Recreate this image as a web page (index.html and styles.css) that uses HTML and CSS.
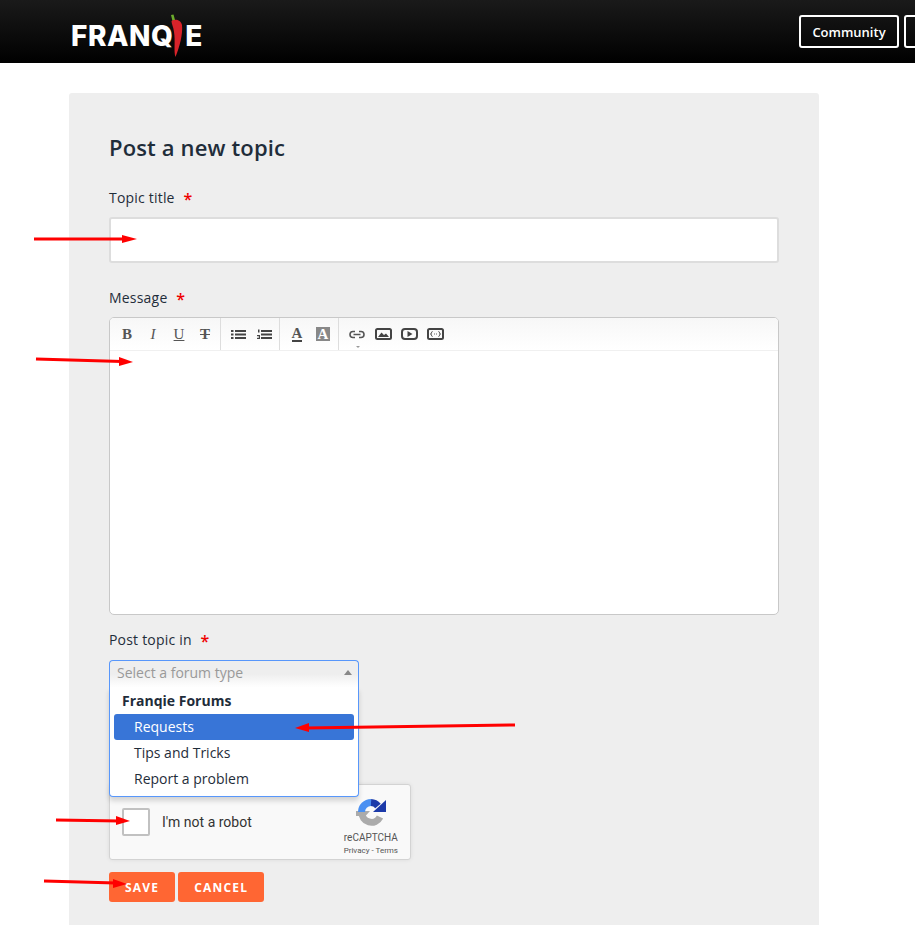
FILE: index.html
```html
<!DOCTYPE html>
<html lang="en">
<head>
    <meta charset="UTF-8">
    <meta name="viewport" content="width=device-width, initial-scale=1.0">
    <title>Post a new topic - Franqie</title>
    <link rel="stylesheet" href="styles.css">
</head>
<body>

<header class="site-header">
    <a class="logo" href="#">
        <span>FRANQ</span>
        <svg class="logo-pepper" width="14" height="44" viewBox="0 0 14 44">
            <path d="M1 1 L3.500 0.500 L5 6 L2.500 7 Z" fill="#6cab2c"/>
            <path d="M1.500 7 C5 4.500 11 6 12 11 C13 20 9.500 33 5.500 43 C3.500 38 5.500 26 4 18 C3.500 13 1.500 10 1.500 7 Z" fill="#d8232a"/>
        </svg>
        <span>E</span>
    </a>
    <nav class="site-nav">
        <a class="nav-btn" href="#">Community</a>
        <a class="nav-btn nav-btn-cut" href="#"></a>
    </nav>
</header>

<main class="panel">
    <h1>Post a new topic</h1>

    <form>
        <div class="form-group">
            <label for="topicTitle">Topic title <span class="req">*</span></label>
            <input type="text" id="topicTitle" class="text-input">
        </div>

        <div class="form-group editor-group">
            <label>Message <span class="req">*</span></label>
            <div class="editor">
                <div class="toolbar">
                    <div class="tb-group">
                        <span class="tb-btn tb-serif"><b>B</b></span>
                        <span class="tb-btn tb-serif"><i>I</i></span>
                        <span class="tb-btn tb-serif tb-under">U</span>
                        <span class="tb-btn tb-serif tb-strike"><b>T</b></span>
                    </div>
                    <div class="tb-group">
                        <span class="tb-btn">
                            <svg width="15" height="11" viewBox="0 0 15 11" fill="#444"><rect y="1" width="2.500" height="2"/><rect y="4.500" width="2.500" height="2"/><rect y="8" width="2.500" height="2"/><rect x="4" y="1" width="11" height="2"/><rect x="4" y="4.500" width="11" height="2"/><rect x="4" y="8" width="11" height="2"/></svg>
                        </span>
                        <span class="tb-btn">
                            <svg width="15" height="11" viewBox="0 0 15 11" fill="#444"><rect x="1" y="0.500" width="1.500" height="3"/><rect y="6" width="3" height="1.200"/><rect y="8.800" width="3" height="1.200"/><rect x="1.800" y="7" width="1.200" height="2"/><rect x="4" y="1" width="11" height="2"/><rect x="4" y="4.500" width="11" height="2"/><rect x="4" y="8" width="11" height="2"/></svg>
                        </span>
                    </div>
                    <div class="tb-group">
                        <span class="tb-btn tb-serif tb-color"><b>A</b></span>
                        <span class="tb-btn tb-serif"><b class="tb-bg">A</b></span>
                    </div>
                    <div class="tb-group tb-last">
                        <span class="tb-btn tb-caret">
                            <svg width="16" height="9" viewBox="0 0 16 9" fill="none" stroke="#555" stroke-width="1.600"><path d="M6 1.500 H4 A3 3 0 0 0 4 7.500 H6 M10 1.500 H12 A3 3 0 0 1 12 7.500 H10 M4.500 4.500 H11.500"/></svg>
                        </span>
                        <span class="tb-btn">
                            <svg width="17" height="12" viewBox="0 0 17 12"><rect x="1" y="1" width="15" height="10" rx="1.500" fill="none" stroke="#444" stroke-width="2"/><path d="M3 9 L6.500 4.500 L9 7 L11 5.500 L14 9 Z" fill="#444"/></svg>
                        </span>
                        <span class="tb-btn">
                            <svg width="17" height="12" viewBox="0 0 17 12"><rect x="1" y="1" width="15" height="10" rx="3" fill="none" stroke="#444" stroke-width="2"/><path d="M6.500 3 L11.500 6 L6.500 9 Z" fill="#444"/></svg>
                        </span>
                        <span class="tb-btn">
                            <svg width="17" height="12" viewBox="0 0 17 12"><rect x="1" y="1" width="15" height="10" rx="1.500" fill="none" stroke="#444" stroke-width="2"/><path d="M5.500 3.500 C4 3.500 5 6 3.500 6 C5 6 4 8.500 5.500 8.500 M11.500 3.500 C13 3.500 12 6 13.500 6 C12 6 13 8.500 11.500 8.500 M7 6 H7.800 M9.200 6 H10" fill="none" stroke="#444" stroke-width="1"/></svg>
                        </span>
                    </div>
                </div>
                <div class="editor-body"></div>
            </div>
        </div>

        <div class="form-group select-group">
            <label>Post topic in <span class="req">*</span></label>
            <div class="select-wrap">
                <div class="select-box">
                    <span>Select a forum type</span>
                    <span class="select-arrow"></span>
                </div>
                <ul class="select-menu">
                    <li class="menu-head">Franqie Forums</li>
                    <li class="menu-item active">Requests</li>
                    <li class="menu-item">Tips and Tricks</li>
                    <li class="menu-item">Report a problem</li>
                </ul>
            </div>
        </div>

        <div class="recaptcha">
            <span class="rc-check"></span>
            <span class="rc-label">I'm not a robot</span>
            <div class="rc-brand">
                <svg width="32" height="32" viewBox="0 0 32 32" fill="none" stroke-width="7">
                    <path d="M7 15 A9.500 9.500 0 0 0 25 20" stroke="#ababab"/>
                    <path d="M1 14 H15 L10.500 19 H1 Z" fill="#ababab"/>
                    <path d="M6.500 15 A9.500 9.500 0 0 1 16 5.500" stroke="#4a90f2"/>
                    <path d="M16 5.500 A9.500 9.500 0 0 1 23 9" stroke="#1c3aa9"/>
                    <path d="M31 3 V15 H18 Z" fill="#1c3aa9"/>
                </svg>
                <span class="rc-name">reCAPTCHA</span>
                <span class="rc-links">Privacy - Terms</span>
            </div>
        </div>

        <div class="actions">
            <button type="button" class="btn">Save</button>
            <button type="button" class="btn">Cancel</button>
        </div>
    </form>
</main>

<svg class="arrows" width="915" height="925" viewBox="0 0 915 925">
    <g fill="#f00" stroke="#f00">
        <path d="M34 239 L125 239" stroke-width="3" fill="none"/>
        <path d="M122 235 L137 239 L122 243 Z" stroke="none"/>
        <path d="M36 359 L122 361.500" stroke-width="3" fill="none"/>
        <path d="M119 357 L133 362 L119 366 Z" stroke="none"/>
        <path d="M515 725 L305 728" stroke-width="3" fill="none"/>
        <path d="M309 723 L295 728 L309 732 Z" stroke="none"/>
        <path d="M56 820 L120 821" stroke-width="3" fill="none"/>
        <path d="M116 816 L130 821 L116 825 Z" stroke="none"/>
        <path d="M44 881 L116 883" stroke-width="3" fill="none"/>
        <path d="M113 879 L127 884 L113 888 Z" stroke="none"/>
    </g>
</svg>

</body>
</html>
```

FILE: styles.css
```css
* {
    box-sizing: border-box;
}
html, body {
    height: 925px;
    overflow: hidden;
}
body {
    position: relative;
    margin: 0;
    padding: 0;
    font-family: "Open Sans", Arial, sans-serif;
    font-size: 14px;
    color: #1f2d3a;
    background-color: #fff;
}

/* header */
.site-header {
    display: flex;
    align-items: center;
    justify-content: space-between;
    height: 63px;
    padding-left: 71px;
    background: linear-gradient(#1a1a1a, #000);
    overflow: hidden;
}
.logo {
    display: flex;
    align-items: center;
    margin-top: 8px;
    font-family: Inter, Arial, sans-serif;
    font-size: 28px;
    font-weight: 800;
    letter-spacing: 0.5px;
    color: #fff;
    text-decoration: none;
}
.logo-pepper {
    margin: 0 1px 0 -3px;
}
.site-nav {
    display: flex;
    gap: 5px;
    margin-right: -60px;
}
.nav-btn {
    display: block;
    width: 100px;
    height: 33px;
    line-height: 30px;
    text-align: center;
    border: 2px solid #fff;
    border-radius: 3px;
    font-size: 13px;
    font-weight: 600;
    color: #fff;
    text-decoration: none;
}
.nav-btn-cut {
    width: 71px;
}

/* panel */
.panel {
    width: 750px;
    height: 832px;
    margin: 30px 0 0 69px;
    padding: 39px 40px 0;
    background-color: #eee;
    border-radius: 3px 3px 0 0;
}
h1 {
    margin: 0 0 25px;
    font-size: 22px;
    line-height: 30px;
    font-weight: 600;
    letter-spacing: 0.15px;
    color: #1f2d3a;
}
.form-group {
    margin-bottom: 24px;
}
.editor-group {
    margin-bottom: 14px;
}
.form-group label {
    display: block;
    height: 20px;
    margin-bottom: 10px;
    line-height: 22px;
    letter-spacing: 0.2px;
}
.req {
    margin-left: 5px;
    color: #e00;
    font-size: 16px;
    font-weight: 600;
    vertical-align: -2px;
}
.text-input {
    display: block;
    width: 670px;
    height: 46px;
    background: #fff;
    border: 2px solid #ddd;
    border-radius: 3px;
}

/* editor */
.editor {
    width: 670px;
    height: 298px;
    background: #fff;
    border: 1px solid #c8c8c8;
    border-radius: 5px;
    overflow: hidden;
}
.toolbar {
    display: flex;
    height: 33px;
    padding-left: 4px;
    background: linear-gradient(#f7f7f7, #fff);
    border-bottom: 1px solid #f0f0f0;
}
.tb-group {
    display: flex;
    padding: 0 2px 0 4px;
    border-right: 1px solid #ddd;
}
.tb-group:first-child {
    padding-left: 0;
    padding-right: 2px;
}
.tb-last {
    padding-left: 5px;
    border-right: none;
}
.tb-btn {
    position: relative;
    display: flex;
    align-items: center;
    justify-content: center;
    width: 26px;
    height: 32px;
    color: #555;
}
.tb-serif {
    font-family: "Liberation Serif", "Times New Roman", serif;
    font-size: 15px;
}
.tb-under {
    text-decoration: underline;
}
.tb-strike {
    text-decoration: line-through;
}
.tb-color b {
    border-bottom: 2px solid #444;
    line-height: 13px;
}
.tb-bg {
    display: block;
    width: 14px;
    height: 14px;
    line-height: 14px;
    text-align: center;
    background: #888;
    color: #fff;
}
.tb-caret::after {
    content: "";
    position: absolute;
    left: 12px;
    bottom: 0;
    border: 2px solid transparent;
    border-top-color: #999;
}

/* select */
.select-group {
    margin-bottom: 0;
}
.select-group label {
    margin-bottom: 11px;
}
.select-wrap {
    position: relative;
    width: 250px;
    height: 26px;
}
.select-box {
    display: flex;
    align-items: center;
    justify-content: space-between;
    height: 27px;
    padding: 0 6px 3px 7px;
    background: linear-gradient(#eee 50%, #fff);
    border: 1px solid #5897fb;
    border-bottom: none;
    border-radius: 4px 4px 0 0;
    color: #999;
}
.select-arrow {
    width: 0;
    height: 0;
    border: 4px solid transparent;
    border-top: none;
    border-bottom: 5px solid #888;
}
.select-menu {
    position: absolute;
    top: 27px;
    left: 0;
    width: 250px;
    height: 110px;
    margin: 0;
    padding: 1px 4px 0;
    list-style: none;
    background: #fff;
    border: 1px solid #5897fb;
    border-top: none;
    border-radius: 0 0 4px 4px;
    box-shadow: 0 4px 5px rgba(0,0,0,0.15);
    z-index: 2;
}
.select-menu li {
    height: 26px;
    line-height: 26px;
}
.menu-head {
    padding-left: 8px;
    font-weight: 700;
}
.menu-item {
    padding-left: 20px;
    border-radius: 3px;
}
.menu-item.active {
    background: #3875d7;
    color: #fff;
}

/* recaptcha */
.recaptcha {
    display: flex;
    align-items: center;
    width: 302px;
    height: 76px;
    margin-top: 98px;
    padding: 0 12px;
    background: #f9f9f9;
    border: 1px solid #d3d3d3;
    border-radius: 3px;
    box-shadow: 0 0 4px rgba(0,0,0,0.08);
    font-family: Roboto, Arial, sans-serif;
}
.rc-check {
    width: 28px;
    height: 28px;
    background: #fff;
    border: 2px solid #c1c1c1;
    border-radius: 2px;
}
.rc-label {
    margin-left: 12px;
    font-size: 14px;
    color: #333;
}
.rc-brand {
    display: flex;
    flex-direction: column;
    align-items: center;
    margin: 9px 0 0 auto;
    color: #555;
}
.rc-name {
    margin-top: 2px;
    font-size: 10px;
    line-height: 13px;
}
.rc-links {
    font-size: 8px;
    line-height: 13px;
}

/* buttons */
.actions {
    display: flex;
    gap: 3px;
    margin-top: 12px;
}
.btn {
    height: 30px;
    padding: 0 16px;
    background-color: #ff6633;
    color: #fff;
    border: none;
    border-radius: 3px;
    font-family: "Open Sans", Arial, sans-serif;
    font-size: 12px;
    font-weight: 700;
    letter-spacing: 1.2px;
    text-transform: uppercase;
    cursor: pointer;
}

.arrows {
    position: absolute;
    top: 0;
    left: 0;
    z-index: 5;
    pointer-events: none;
}
```
